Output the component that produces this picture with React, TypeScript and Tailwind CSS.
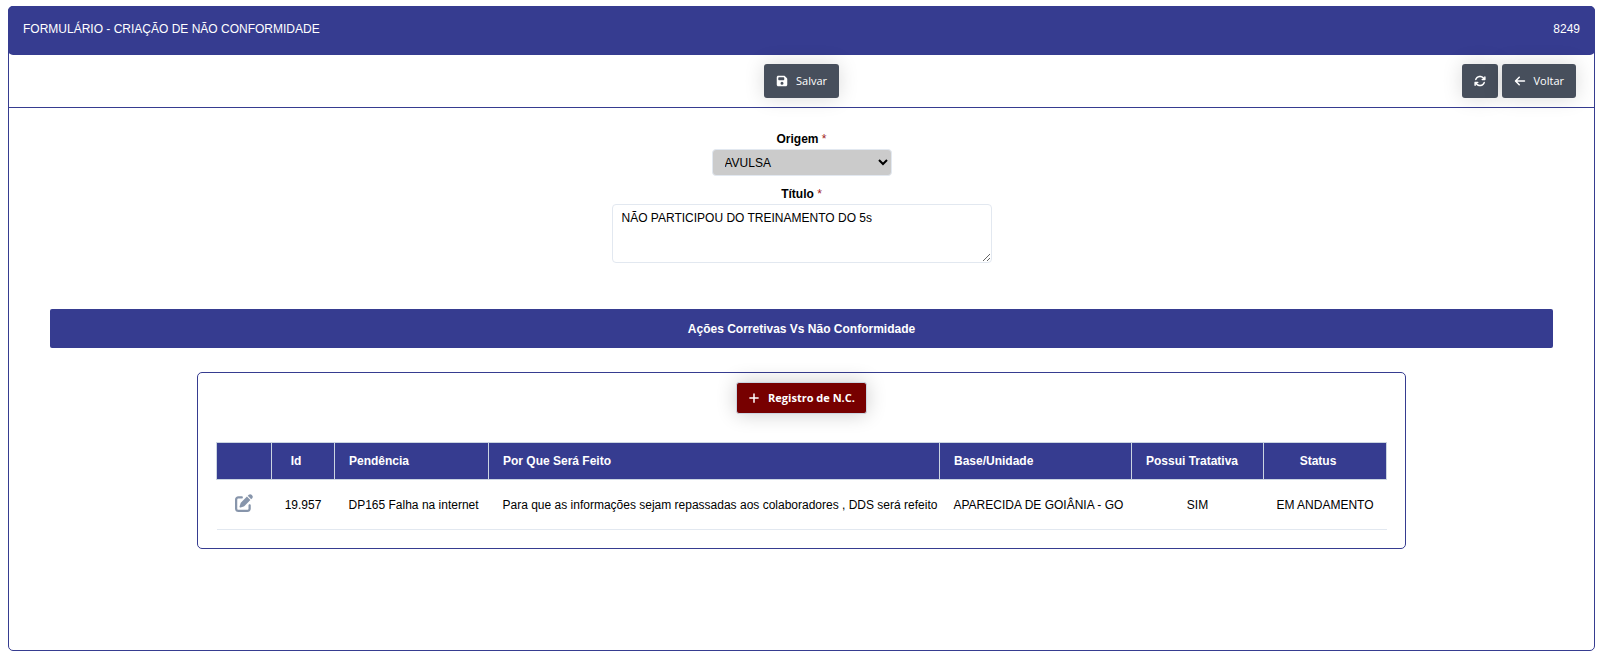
import type { ReactNode } from "react";
import {
  FaArrowLeft,
  FaArrowsRotate,
  FaFloppyDisk,
  FaPenToSquare,
  FaPlus,
} from "react-icons/fa6";

function ToolbarButton({ label, children }: { label?: string; children: ReactNode }) {
  return (
    <button
      type="button"
      aria-label={label}
      className="flex h-[34px] items-center gap-2 rounded-[3px] bg-[#474f5c] px-3 font-['Open_Sans',sans-serif] text-[11px] text-white shadow-[0_0_20px_rgba(0,0,0,0.15)]"
    >
      {children}
    </button>
  );
}

function RequiredMark() {
  return <span className="font-normal text-[#a02020]"> *</span>;
}

const headerCell = "h-[37px] border border-[#cbd5e1] pl-3.5";
const bodyCell = "h-[50px] border-b border-[#e2e8f0]";

export default function App() {
  return (
    <div className="flex min-h-screen flex-col bg-white pt-1.5 pr-0.5 pb-1 pl-2 font-['Liberation_Sans',Arial,sans-serif] text-xs text-black">
      <main className="flex flex-1 flex-col rounded-[5px] border border-[#363c90]">
        <header className="-mx-px -mt-px flex h-[49px] justify-between rounded-[5px] bg-[#363c90] px-[15px] pt-[15px] text-white">
          <h1>FORMULÁRIO - CRIAÇÃO DE NÃO CONFORMIDADE</h1>
          <span>8249</span>
        </header>

        <div className="grid grid-cols-[1fr_auto_1fr] border-b border-[#363c90] px-[18px] py-[9px]">
          <div className="col-start-2">
            <ToolbarButton>
              <FaFloppyDisk className="size-3" />
              <span>Salvar</span>
            </ToolbarButton>
          </div>
          <div className="flex justify-end gap-1">
            <ToolbarButton label="Atualizar">
              <FaArrowsRotate className="size-3" />
            </ToolbarButton>
            <ToolbarButton>
              <FaArrowLeft className="size-3" />
              <span>Voltar</span>
            </ToolbarButton>
          </div>
        </div>

        <form className="flex flex-col items-center pt-[23px]">
          <label htmlFor="origem" className="pb-0.5 leading-4 font-bold">
            Origem
            <RequiredMark />
          </label>
          <select
            id="origem"
            defaultValue="AVULSA"
            className="h-[27px] w-[180px] rounded border border-[#e2e8f0] bg-[#cbcbcb] px-2"
          >
            <option>AVULSA</option>
          </select>
          <label htmlFor="titulo" className="pt-2.5 pb-0.5 leading-4 font-bold">
            Título
            <RequiredMark />
          </label>
          <textarea
            id="titulo"
            defaultValue="NÃO PARTICIPOU DO TREINAMENTO DO 5s"
            className="h-[59px] w-[380px] max-w-full rounded border border-[#e2e8f0] px-[9px] py-[5px] leading-4"
          />
        </form>

        <section className="px-[41px] pt-[46px] pb-6">
          <h2 className="flex h-[39px] items-center justify-center rounded-[2px] bg-[#363c90] font-bold text-white">
            Ações Corretivas Vs Não Conformidade
          </h2>

          <div className="mx-auto mt-6 flex w-full max-w-[1209px] flex-col items-center rounded-[5px] border border-[#363c90] px-[18px] pt-[9px] pb-[18px]">
            <button
              type="button"
              className="flex h-8 items-center gap-2 rounded-[3px] border border-[#cbd5e1] bg-[#770000] px-[11px] font-['Open_Sans',sans-serif] text-[11px] font-bold text-white shadow-[0_0_20px_rgba(0,0,0,0.2)]"
            >
              <FaPlus className="size-3" />
              <span>Registro de N.C.</span>
            </button>

            <table className="mt-7 w-full table-fixed border-collapse whitespace-nowrap">
              <colgroup>
                <col className="w-[55px]" />
                <col className="w-[63px]" />
                <col className="w-[154px]" />
                <col />
                <col className="w-[192px]" />
                <col className="w-[132px]" />
                <col className="w-[123px]" />
              </colgroup>
              <thead>
                <tr className="bg-[#363c90] text-white">
                  <th className={headerCell} aria-label="Editar" />
                  <th className={`${headerCell} pr-7`}>Id</th>
                  <th className={`${headerCell} text-left`}>Pendência</th>
                  <th className={`${headerCell} text-left`}>Por Que Será Feito</th>
                  <th className={`${headerCell} text-left`}>Base/Unidade</th>
                  <th className={`${headerCell} text-left`}>Possui Tratativa</th>
                  <th className={`${headerCell} pr-7`}>Status</th>
                </tr>
              </thead>
              <tbody>
                <tr className="text-center">
                  <td className="border-b border-[#e2e8f0] pb-1">
                    <button
                      type="button"
                      aria-label="Editar registro"
                      className="mx-auto block text-[#8795ab]"
                    >
                      <FaPenToSquare className="size-[18px]" />
                    </button>
                  </td>
                  <td className={bodyCell}>19.957</td>
                  <td className={`${bodyCell} pl-3.5 text-left`}>DP165 Falha na internet</td>
                  <td className={`${bodyCell} pl-3.5 text-left`}>
                    Para que as informações sejam repassadas aos colaboradores , DDS será refeito
                  </td>
                  <td className={`${bodyCell} pl-3.5 text-left`}>APARECIDA DE GOIÂNIA - GO</td>
                  <td className={bodyCell}>SIM</td>
                  <td className={bodyCell}>EM ANDAMENTO</td>
                </tr>
              </tbody>
            </table>
          </div>
        </section>
      </main>
    </div>
  );
}
